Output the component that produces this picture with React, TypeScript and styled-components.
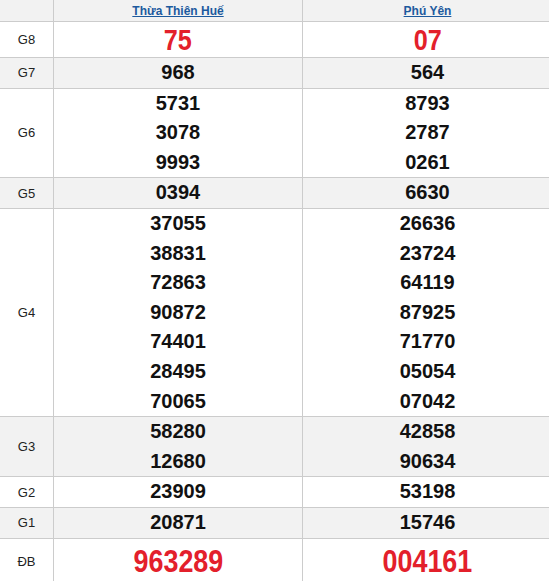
import React from "react";
import styled, { createGlobalStyle } from "styled-components";

const GlobalStyle = createGlobalStyle`
  html, body {
    margin: 0;
    padding: 0;
    background: #ffffff;
    overflow: hidden;
  }
`;

const Table = styled.div`
  width: 553px;
  font-family: "Liberation Sans", Arial, sans-serif;
`;

const Row = styled.div<{ $shade?: boolean }>`
  display: grid;
  grid-template-columns: 54px 249px 250px;
  background: ${(p) => (p.$shade ? "#f2f2f2" : "#ffffff")};
  border-bottom: 1px solid #cccccc;
`;

const Label = styled.div`
  display: flex;
  align-items: center;
  justify-content: center;
  border-right: 1px solid #cccccc;
  font-size: 13px;
  color: #222222;
`;

const Cell = styled.div`
  display: flex;
  flex-direction: column;
  align-items: center;
  justify-content: center;
  border-right: 1px solid #cccccc;
`;

const HeadCell = styled(Cell)`
  height: 21px;
`;

const Province = styled.a`
  font-size: 12px;
  font-weight: bold;
  color: #1d5a9e;
  text-decoration: underline;
`;

const Num = styled.div`
  font-weight: bold;
  color: #111111;
  font-size: 20px;
  line-height: 29.6px;
`;

// red prize numbers are drawn narrower than plain Arial bold
const BigNum = styled.div<{ $size: number }>`
  font-weight: bold;
  color: #e3202b;
  font-size: ${(p) => p.$size}px;
  line-height: 35px;
  transform: scaleX(0.84);
`;

const prizes: { name: string; a: string[]; b: string[]; big?: number; tall?: number }[] = [
  { name: "G8", a: ["75"], b: ["07"], big: 30 },
  { name: "G7", a: ["968"], b: ["564"] },
  { name: "G6", a: ["5731", "3078", "9993"], b: ["8793", "2787", "0261"] },
  { name: "G5", a: ["0394"], b: ["6630"] },
  {
    name: "G4",
    a: ["37055", "38831", "72863", "90872", "74401", "28495", "70065"],
    b: ["26636", "23724", "64119", "87925", "71770", "05054", "07042"],
  },
  { name: "G3", a: ["58280", "12680"], b: ["42858", "90634"] },
  { name: "G2", a: ["23909"], b: ["53198"] },
  { name: "G1", a: ["20871"], b: ["15746"] },
  { name: "ĐB", a: ["963289"], b: ["004161"], big: 32, tall: 46 },
];

function Numbers({ list, big }: { list: string[]; big?: number }) {
  return (
    <Cell>
      {list.map((n, j) =>
        big ? (
          <BigNum key={j} $size={big}>
            {n}
          </BigNum>
        ) : (
          <Num key={j}>{n}</Num>
        )
      )}
    </Cell>
  );
}

export default function App() {
  return (
    <>
      <GlobalStyle />
      <Table>
        <Row $shade>
          <Label />
          <HeadCell>
            <Province href="#">Thừa Thiên Huế</Province>
          </HeadCell>
          <HeadCell>
            <Province href="#">Phú Yên</Province>
          </HeadCell>
        </Row>
        {prizes.map((p, i) => (
          <Row key={p.name} $shade={i % 2 === 1} style={p.tall ? { height: p.tall } : undefined}>
            <Label>{p.name}</Label>
            <Numbers list={p.a} big={p.big} />
            <Numbers list={p.b} big={p.big} />
          </Row>
        ))}
      </Table>
    </>
  );
}
